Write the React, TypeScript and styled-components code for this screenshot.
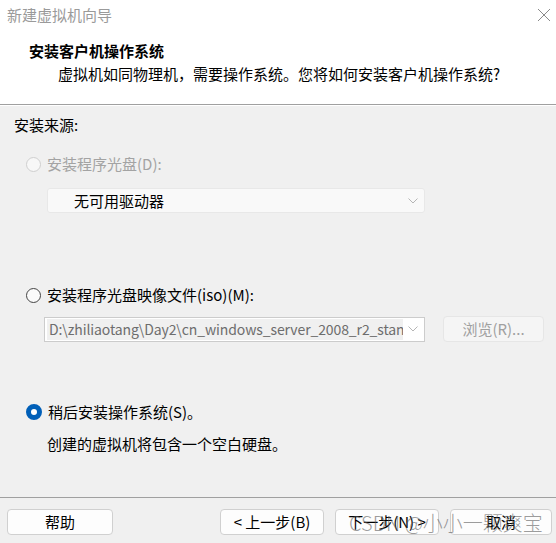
import styled, { createGlobalStyle } from 'styled-components';

const GlobalStyle = createGlobalStyle`
  html, body {
    margin: 0;
    padding: 0;
    background: #f0f0f0;
  }
  body {
    font-family: "Noto Sans CJK SC", "Noto Sans", sans-serif;
    font-size: 15px;
    color: #000;
  }
`;

/** 整个向导窗口 */
const Dialog = styled.div`
  position: relative;
  width: 556px;
  height: 543px;
  display: flex;
  flex-direction: column;
  background: #f0f0f0;
  overflow: hidden;
`;

const TitleBar = styled.div`
  height: 30px;
  display: flex;
  align-items: center;
  justify-content: space-between;
  padding: 0 5px 0 7px;
  background: #fff;
  color: #9a9a9a;
  line-height: 20px;
`;

const Header = styled.div`
  height: 75px;
  padding: 11px 0 0 29px;
  box-sizing: border-box;
  background: #fff;
  border-bottom: 1px solid #a0a0a0;
  box-shadow: 0 1px 0 #fff;
`;

const Heading = styled.div`
  font-weight: 700;
  line-height: 20px;
`;

const SubHeading = styled.div`
  margin: 3px 0 0 29px;
  line-height: 20px;
`;

const Body = styled.div`
  flex: 1;
  display: flex;
  flex-direction: column;
  align-items: flex-start;
  padding: 10px 0 0 14px;
`;

const Line = styled.div<{ $top: number; $left?: number; $muted?: boolean }>`
  margin-top: ${p => p.$top}px;
  margin-left: ${p => p.$left ?? 0}px;
  line-height: 20px;
  color: ${p => (p.$muted ? '#a3a3a3' : '#000')};
`;

const RadioRow = styled.div<{ $top: number; $muted?: boolean }>`
  margin: ${p => p.$top}px 0 0 12px;
  display: flex;
  align-items: center;
  gap: 6px;
  line-height: 20px;
  color: ${p => (p.$muted ? '#a3a3a3' : '#000')};
`;

const RadioDot = styled.span<{ $checked?: boolean; $disabled?: boolean }>`
  width: 15px;
  height: 15px;
  box-sizing: border-box;
  border-radius: 50%;
  flex: none;
  border: 1px solid ${p => (p.$disabled ? '#cfcfcf' : '#444')};
  background: ${p => (p.$disabled ? '#f7f7f7' : '#fafafa')};
  ${p =>
    p.$checked &&
    `
    width: 16px;
    height: 16px;
    border: 5px solid #005fb8;
    background: #fff;
  `}
`;

const SelectBox = styled.div`
  margin: 14px 0 0 33px;
  width: 378px;
  height: 25px;
  box-sizing: border-box;
  display: flex;
  align-items: center;
  justify-content: space-between;
  padding: 0 6px 0 26px;
  background: #f9f9f9;
  border: 1px solid #e8e8e8;
  border-radius: 3px;
`;

const InputRow = styled.div`
  margin: 11px 0 0 30px;
  display: flex;
  align-items: center;
  gap: 18px;
`;

const ComboInput = styled.div`
  width: 381px;
  height: 25px;
  box-sizing: border-box;
  display: flex;
  align-items: center;
  padding: 0 6px 0 2px;
  background: #fff;
  border: 1px solid #cccccc;
`;

const ComboText = styled.span`
  width: 356px;
  height: 21px;
  line-height: 21px;
  overflow: hidden;
  white-space: nowrap;
  padding-left: 2px;
  box-sizing: border-box;
  background: #f0f0f0;
  color: #6d6d6d;
  font-size: 14px;
  letter-spacing: -0.1px;
  flex: none;
`;

const Chevron = styled.svg`
  margin-left: auto;
  flex: none;
`;

const Button = styled.div<{ $disabled?: boolean; $width?: number }>`
  width: ${p => p.$width ?? 104}px;
  height: 26px;
  box-sizing: border-box;
  display: flex;
  align-items: center;
  justify-content: center;
  border-radius: 4px;
  border: 1px solid ${p => (p.$disabled ? '#e6e6e6' : '#d0d0d0')};
  background: ${p => (p.$disabled ? '#f5f5f5' : '#fdfdfd')};
  color: ${p => (p.$disabled ? '#a0a0a0' : '#000')};
  line-height: 20px;
`;

const Footer = styled.div`
  height: 46px;
  box-sizing: border-box;
  border-top: 1px solid #a0a0a0;
  display: flex;
  align-items: flex-start;
  padding: 11px 0 0 7px;
`;

const FooterRight = styled.div`
  margin-left: auto;
  margin-right: 4px;
  display: flex;
  gap: 11px;
`;

const Watermark = styled.div`
  position: absolute;
  left: 349px;
  top: 510px;
  font-size: 20px;
  line-height: 26px;
  font-weight: 300;
  color: rgba(90, 90, 90, 0.6);
  white-space: nowrap;
  pointer-events: none;
`;

function CloseIcon() {
  return (
    <svg width="14" height="14" viewBox="0 0 14 14">
      <path d="M1 1 L13 13 M13 1 L1 13" stroke="#8a8a8a" strokeWidth="1" />
    </svg>
  );
}

function DownArrow({ color }: { color: string }) {
  return (
    <Chevron width="10" height="6" viewBox="0 0 10 6">
      <path d="M0.5 0.5 L5 5 L9.5 0.5" fill="none" stroke={color} strokeWidth="1" />
    </Chevron>
  );
}

export default function App() {
  return (
    <>
      <GlobalStyle />
      <Dialog>
        <TitleBar>
          <span>新建虚拟机向导</span>
          <CloseIcon />
        </TitleBar>
        <Header>
          <Heading>安装客户机操作系统</Heading>
          <SubHeading>虚拟机如同物理机，需要操作系统。您将如何安装客户机操作系统?</SubHeading>
        </Header>
        <Body>
          <Line $top={0}>安装来源:</Line>
          <RadioRow $top={19} $muted>
            <RadioDot $disabled />
            安装程序光盘(D):
          </RadioRow>
          <SelectBox>
            <span>无可用驱动器</span>
            <DownArrow color="#b5b5b5" />
          </SelectBox>
          <RadioRow $top={72}>
            <RadioDot />
            安装程序光盘映像文件(iso)(M):
          </RadioRow>
          <InputRow>
            <ComboInput>
              <ComboText>D:\zhiliaotang\Day2\cn_windows_server_2008_r2_standard_enterprise</ComboText>
              <DownArrow color="#b5b5b5" />
            </ComboInput>
            <Button $disabled $width={101}>
              浏览(R)...
            </Button>
          </InputRow>
          <RadioRow $top={60}>
            <RadioDot $checked />
            稍后安装操作系统(S)。
          </RadioRow>
          <Line $top={12} $left={33}>
            创建的虚拟机将包含一个空白硬盘。
          </Line>
        </Body>
        <Footer>
          <Button $width={106}>帮助</Button>
          <FooterRight>
            <Button>&lt; 上一步(B)</Button>
            <Button>下一步(N) &gt;</Button>
            <Button $width={102}>取消</Button>
          </FooterRight>
        </Footer>
        <Watermark>CSDN @小小一颗爽宝</Watermark>
      </Dialog>
    </>
  );
}
